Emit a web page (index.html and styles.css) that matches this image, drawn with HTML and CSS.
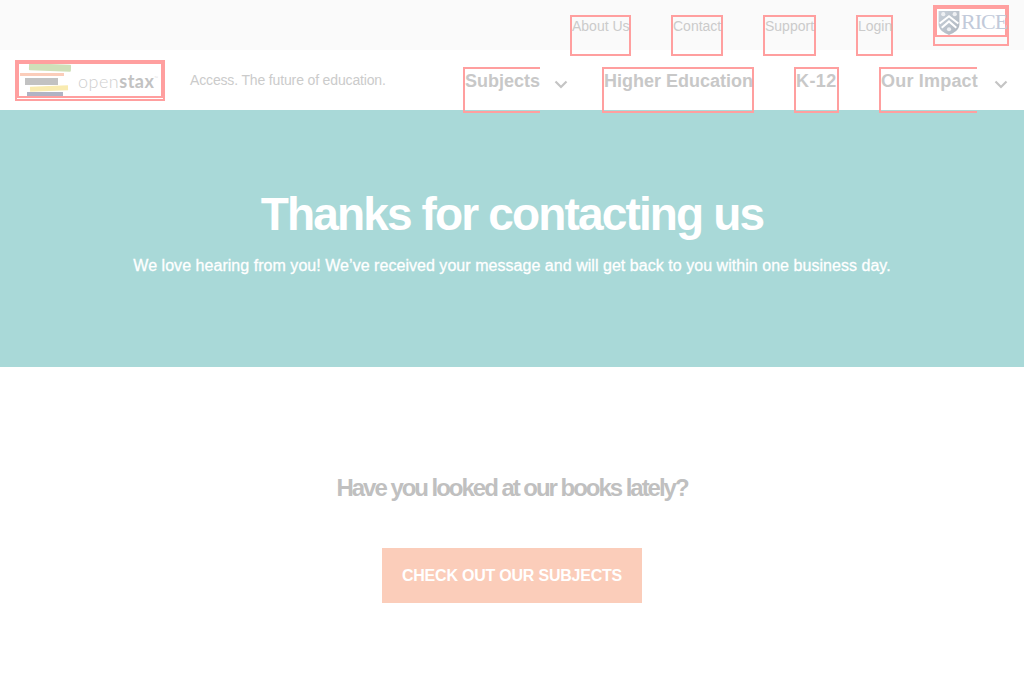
FILE: index.html
```html
<!DOCTYPE html>
<html lang="en">
<head>
<meta charset="utf-8">
<title>Thanks for contacting us</title>
<link rel="stylesheet" href="styles.css">
</head>
<body>
<header class="top-bar">
  <nav class="top-links">
    <a class="top-link about" href="#">About Us</a>
    <a class="top-link contact" href="#">Contact</a>
    <a class="top-link support" href="#">Support</a>
    <a class="top-link login" href="#">Login</a>
  </nav>
  <a class="rice" href="#">
    <span class="rice-img">
      <svg class="shield" width="22" height="25" viewBox="0 0 20 24">
        <defs><linearGradient id="sg" x1="0" y1="0" x2="1" y2="1"><stop offset="0" stop-color="#c9d1da"/><stop offset="1" stop-color="#aeb6bf"/></linearGradient></defs>
        <path d="M0 1h20v13c0 5-5 8-10 10C5 22 0 19 0 14z" fill="url(#sg)"/>
        <path d="M1 13l9-7 9 7M3 17l7-6 7 6" fill="none" stroke="#fff" stroke-width="2"/>
        <circle cx="4.500" cy="4" r="2" fill="#eef0f3"/><circle cx="15.500" cy="4" r="2" fill="#eef0f3"/><circle cx="10" cy="18.500" r="2" fill="#eef0f3"/>
      </svg>
      <span class="rice-word">RICE</span>
    </span>
  </a>
</header>
<div class="main-bar">
  <a class="logo" href="#">
    <span class="logo-img">
      <svg class="books" width="54" height="32" viewBox="0 0 54 32">
        <rect x="9" y="0" width="42" height="7" rx="1" fill="#cfe0b9" transform="rotate(2 30 3)"/>
        <rect x="0" y="9" width="44" height="3" fill="#fbcdba"/>
        <rect x="5" y="14" width="33" height="7" fill="#c2c2c2"/>
        <rect x="10" y="22" width="38" height="5" fill="#f9ebb0" transform="rotate(-2 29 24)"/>
        <rect x="7" y="28" width="36" height="4" fill="#b0b3c4"/>
      </svg>
      <span class="wordmark">open<b>stax</b><sup>™</sup></span>
    </span>
  </a>
  <span class="tagline">Access. The future of education.</span>
  <nav class="main-links">
    <a class="main-link open subjects" href="#">Subjects</a>
    <svg class="chev subjects-chev" width="14" height="9" viewBox="0 0 14 9"><path d="M1.500 1.500L7 7l5.500-5.500" fill="none" stroke="#c4c4c4" stroke-width="2.200"/></svg>
    <a class="main-link higher" href="#">Higher Education</a>
    <a class="main-link k12" href="#">K-12</a>
    <a class="main-link open impact" href="#">Our Impact</a>
    <svg class="chev impact-chev" width="14" height="9" viewBox="0 0 14 9"><path d="M1.500 1.500L7 7l5.500-5.500" fill="none" stroke="#c4c4c4" stroke-width="2.200"/></svg>
  </nav>
</div>
<section class="hero">
  <h1>Thanks for contacting us</h1>
  <p>We love hearing from you! We’ve received your message and will get back to you within one business day.</p>
</section>
<section class="cta">
  <h2>Have you looked at our books lately?</h2>
  <a class="button" href="#">CHECK OUT OUR SUBJECTS</a>
</section>
</body>
</html>
```
FILE: styles.css
```css
* { box-sizing: border-box; }
html, body { margin: 0; height: 100%; overflow: hidden; }
body { font-family: "Liberation Sans", Arial, sans-serif; background: #fff; color: #c2c2c2; }
a { color: inherit; text-decoration: none; }

.top-bar { height: 50px; background: #fafafa; display: flex; justify-content: flex-end; align-items: flex-start; padding: 5px 15px 0 0; position: relative; z-index: 1; }
.top-links { display: flex; gap: 40px; margin: 10px 40px 0 0; }
.top-link { height: 41px; border: 2px solid #ff9f9f; font-size: 14px; line-height: 17px; padding-top: 1px; color: #cbcbcb; white-space: nowrap; }
.about { width: 61px; }
.contact { width: 52px; }
.support { width: 53px; }
.login { width: 37px; }
.rice { display: block; width: 76px; height: 41px; border: 2px solid #ff9f9f; }
.rice-img { display: flex; align-items: center; height: 30px; border: 2px solid #ff9f9f; background: #fff; }
.shield { flex: none; margin-left: 1px; }
.rice-word { font-family: "Liberation Serif", serif; font-size: 22px; line-height: 26px; color: #c2cada; margin-left: 1px; letter-spacing: -1px; white-space: nowrap; }

.main-bar { height: 60px; background: #fff; display: flex; align-items: flex-start; padding: 10px 15px 0 15px; }
.logo { display: block; width: 150px; height: 41px; border: 2px solid #ff9f9f; flex: none; }
.logo-img { display: flex; align-items: center; height: 36px; border: 2px solid #ff9f9f; }
.books { flex: none; margin-left: 1px; }
.wordmark { font-family: Lato, "Liberation Sans", sans-serif; font-weight: 300; font-size: 18px; letter-spacing: 0.5px; color: #cfcfcf; margin: 1px 0 0 4px; white-space: nowrap; line-height: 20px; }
.wordmark b { font-weight: 700; color: #c2c2c2; }
.wordmark sup { font-size: 5px; vertical-align: 8px; line-height: 0; }
.tagline { font-size: 14px; line-height: 20px; color: #cbcbcb; margin: 10px 0 0 25px; white-space: nowrap; letter-spacing: -0.15px; }
.main-links { display: flex; align-items: flex-start; margin: 7px 1px 0 auto; position: relative; z-index: 2; }
.main-link { height: 46px; border: 2px solid #ff9f9f; font-size: 18px; font-weight: 700; line-height: 21px; padding-top: 2px; color: #c8c8c8; white-space: nowrap; }
.main-link.open { border-right: 0; }
.subjects { width: 77px; }
.higher { width: 152px; }
.k12 { width: 45px; margin-left: 40px; letter-spacing: 0.4px; }
.impact { width: 98px; margin-left: 40px; letter-spacing: 0.2px; }
.chev { flex: none; margin-top: 13px; }
.subjects-chev { margin-left: 14px; margin-right: 34px; }
.impact-chev { margin-left: 17px; }

.hero { height: 257px; background: #a9d9d8; color: #fff; text-align: center; padding-top: 76px; }
.hero h1 { margin: 0; font-size: 46px; line-height: 56px; font-weight: 700; letter-spacing: -1.85px; }
.hero p { margin: 13px 0 0; font-size: 16px; line-height: 22px; font-weight: 400; letter-spacing: 0.04px; -webkit-text-stroke: 0.3px #fff; }

.cta { display: flex; flex-direction: column; align-items: center; padding-top: 105px; }
.cta h2 { margin: 0; font-size: 24px; line-height: 32px; font-weight: 700; letter-spacing: -2.03px; color: #c0c0c0; }
.button { margin-top: 44px; width: 260px; height: 55px; background: #fbcdba; color: #fff; font-weight: 700; font-size: 16px; line-height: 55px; text-align: center; letter-spacing: -0.22px; }
```
